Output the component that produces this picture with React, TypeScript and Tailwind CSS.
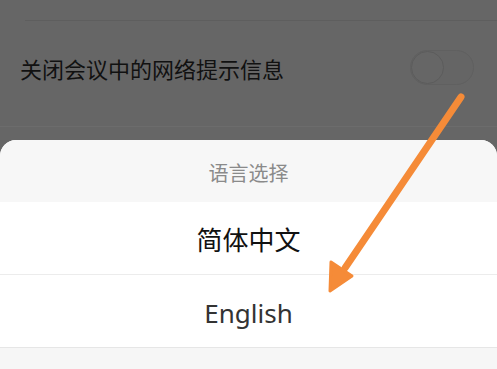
export default function App() {
  return (
    <div
      className="relative h-[369px] w-[497px] overflow-hidden bg-[#666666]"
      style={{ fontFamily: '"Noto Sans", "Noto Sans CJK SC", sans-serif' }}
    >
      {/* dimmed settings page */}
      <div className="pt-[20px]">
        <div className="ml-[25px] h-px bg-[#5e5e5e]" />
        <div className="flex h-[105px] items-center justify-between pb-[12px] pl-[20px] pr-[23px]">
          <span className="text-[22px] leading-none text-[#111]" style={{ fontFamily: '"Noto Sans CJK SC", serif' }}>
            关闭会议中的网络提示信息
          </span>
          <div className="flex h-[35px] w-[64px] items-center rounded-full border border-[#606060] bg-[#656565]">
            <div className="h-[33px] w-[33px] rounded-full border border-[#5c5c5c] bg-[#666666]" />
          </div>
        </div>
        <div className="h-px bg-[#6c6c6c]" />
      </div>

      {/* language sheet */}
      <div className="mt-[13px] overflow-hidden rounded-t-[16px] bg-[#f4f4f4]">
        <div className="flex h-[62px] items-center justify-center bg-[#f7f7f7] pt-[4px] text-[20px] text-[#8a8a8a]" style={{ fontFamily: '"Noto Sans CJK SC", sans-serif' }}>
          语言选择
        </div>
        <div className="flex h-[72px] items-center justify-center bg-white text-[26px] text-[#111]" style={{ fontFamily: '"Noto Sans CJK SC", sans-serif' }}>
          简体中文
        </div>
        <div className="h-px bg-[#ececec]" />
        <div className="flex h-[72px] items-center justify-center bg-white pt-[4px] text-[26px] text-[#333]">
          English
        </div>
        <div className="h-px bg-[#e6e6e6]" />
        <div className="h-[22px] bg-[#f6f6f6]" />
      </div>

      {/* annotation arrow */}
      <svg className="pointer-events-none absolute left-0 top-0" width="497" height="369">
        <line x1="461" y1="97" x2="345" y2="268" stroke="#f58b38" strokeWidth="7" strokeLinecap="round" />
        <polygon points="330,291 331,262 352,276" fill="#f58b38" stroke="#f58b38" strokeWidth="3" strokeLinejoin="round" />
      </svg>
    </div>
  );
}
